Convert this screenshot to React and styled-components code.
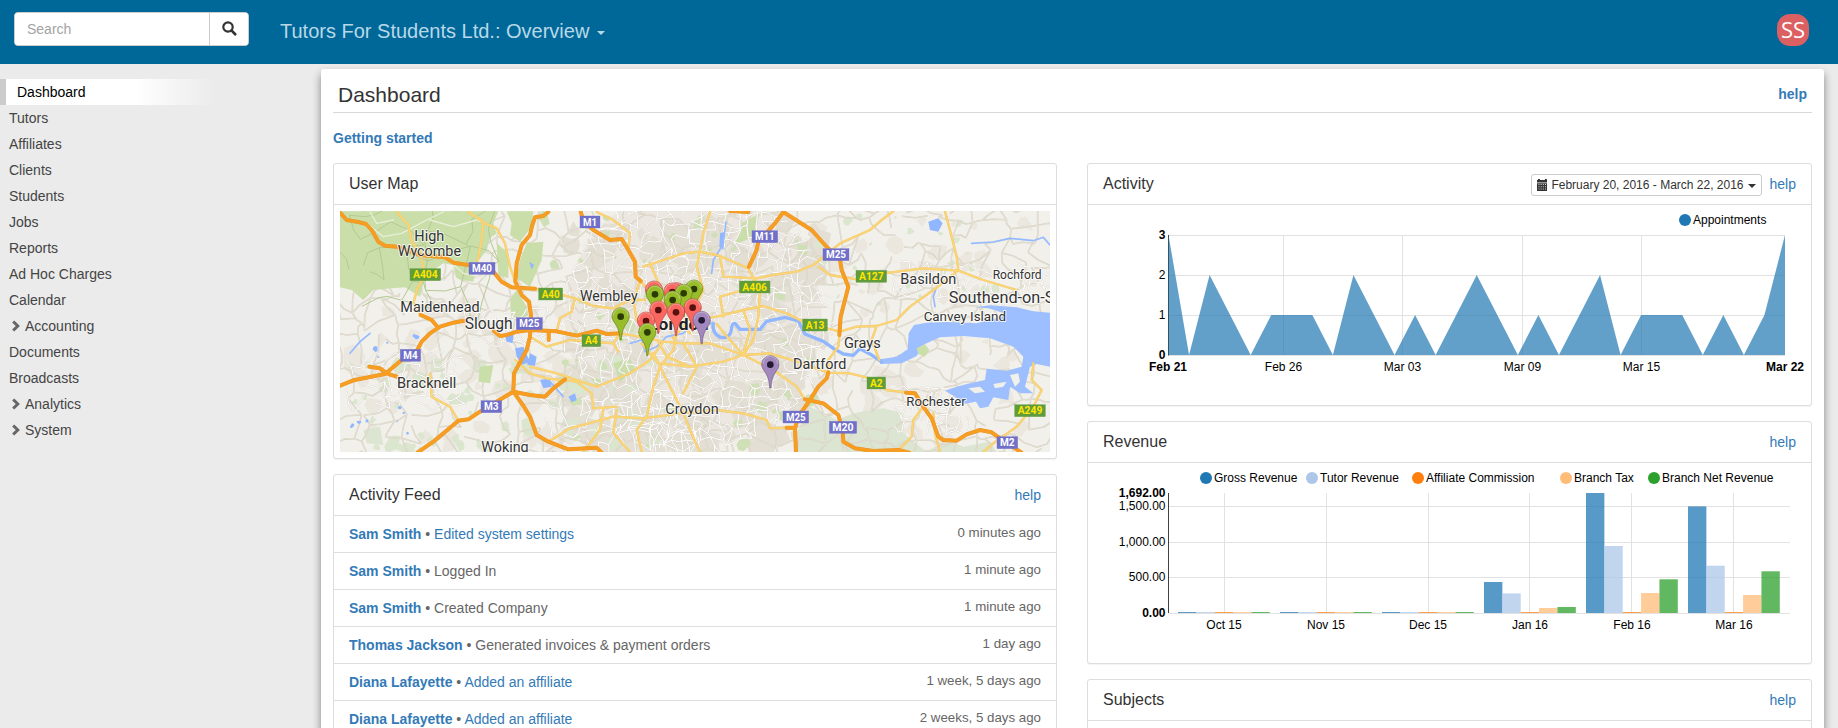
import React from "react";
import styled, { createGlobalStyle } from "styled-components";

const GlobalStyle = createGlobalStyle`
  * { box-sizing: border-box; }
  html, body { margin: 0; padding: 0; height: 100%; overflow: hidden; }
  body {
    background: #ebebeb;
    color: #333;
    font: 14px/20px "Liberation Sans", Arial, sans-serif;
  }
  #root { height: 100%; }
`;

const Page = styled.div`
  height: 728px;
  display: flex;
  flex-direction: column;
  overflow: hidden;
`;

const TopBar = styled.header`
  flex: none;
  height: 64px;
  padding: 0 29px 0 14px;
  background: #006899;
  display: flex;
  align-items: flex-start;
`;

const SearchGroup = styled.div`
  display: flex;
  width: 235px;
  height: 34px;
  margin-top: 12px;
  border: 1px solid #ccc;
  border-radius: 4px;
  background: #fff;
  overflow: hidden;
`;

const SearchInput = styled.input`
  width: 195px;
  border: 0;
  border-right: 1px solid #ccc;
  padding: 0 12px;
  font: inherit;
  outline: none;
  &::placeholder { color: #a3a3a3; opacity: 1; }
`;

const SearchButton = styled.button`
  flex: 1;
  border: 0;
  background: #fff;
  padding: 0 0 1px;
  display: flex;
  align-items: center;
  justify-content: center;
`;

const BranchTitle = styled.div`
  margin: 21px 0 0 31px;
  font-size: 20px;
  line-height: 20px;
  color: #b8d8e8;
  display: flex;
  align-items: center;
  gap: 8px;
`;

const Caret = styled.span`
  border: 4px solid transparent;
  border-top-color: currentColor;
  border-bottom: 0;
  margin-top: ${(p) => p.$drop || 0}px;
`;

const Avatar = styled.div`
  margin: 14px 0 0 auto;
  width: 32px;
  height: 32px;
  border-radius: 13px;
  background: #dc6062;
  color: #fff;
  font: 400 22px/30px "Open Sans", sans-serif;
  text-align: center;
`;

const Columns = styled.div`
  flex: 1;
  display: flex;
  min-height: 0;
`;

const Sidebar = styled.nav`
  width: 321px;
  flex: none;
  padding-top: 15px;
`;

const NavItem = styled.a`
  height: 26px;
  display: flex;
  align-items: center;
  padding-left: ${(p) => (p.$active ? 11 : 9)}px;
  color: ${(p) => (p.$active ? "#000" : "#444")};
  width: 215px;
  ${(p) =>
    p.$active &&
    `border-left: 6px solid #ccc;
     background: linear-gradient(to right, #fff 62%, #ebebeb);`}
`;

const Chevron = styled.svg`
  width: 10px;
  height: 12px;
  margin: 0 4px 0 2px;
`;

const Content = styled.main`
  width: 1503px;
  height: 700px;
  margin-top: 5px;
  padding: 0 12px;
  background: #fff;
  border-radius: 3px;
  box-shadow: 0 5px 8px rgba(0, 0, 0, 0.45);
  flex: none;
`;

const PageHeading = styled.div`
  height: 44px;
  padding: 0 5px;
  border-bottom: 1px solid #d8d8d8;
  display: flex;
  justify-content: space-between;
  align-items: center;
`;

const PageTitle = styled.h1`
  margin: 8px 0 0;
  font-size: 21px;
  font-weight: 400;
`;

const Link = styled.a`
  color: #337ab7;
  font-weight: ${(p) => (p.$bold ? 700 : 400)};
`;

const HeadingLink = styled(Link)`
  margin-top: 6px;
`;

const StartRow = styled.div`
  height: 50px;
  padding-top: 15px;
`;

const Grid = styled.div`
  display: grid;
  grid-template-columns: 724px 725px;
  column-gap: 30px;
  align-items: start;
`;

const Stack = styled.div`
  display: flex;
  flex-direction: column;
  gap: 15px;
`;

const Panel = styled.section`
  border: 1px solid #ddd;
  border-radius: 3px;
  box-shadow: 0 1px 1px rgba(0, 0, 0, 0.05);
  background: #fff;
`;

const PanelHead = styled.div`
  height: 41px;
  padding: 0 15px;
  border-bottom: 1px solid #ddd;
  display: flex;
  align-items: center;
  gap: 8px;
`;

const PanelTitle = styled.h2`
  margin: 0 auto 0 0;
  font-size: 16px;
  font-weight: 400;
`;

const DateButton = styled.button`
  height: 22px;
  width: 231px;
  padding: 0 5px;
  margin-top: 2px;
  border: 1px solid #ccc;
  border-radius: 3px;
  background: #fff;
  color: #333;
  font: 12px/18px "Liberation Sans", Arial, sans-serif;
  display: flex;
  align-items: center;
  gap: 4px;
  white-space: nowrap;
`;

const MapFrame = styled.div`
  padding: 6px;
  height: 253px;
`;

const MapSvg = styled.svg`
  display: block;
  width: 710px;
  height: 241px;
  font-family: Roboto, sans-serif;
`;

const ChartSvg = styled.svg`
  display: block;
  width: 723px;
  height: 200px;
  font: 12px "Liberation Sans", Arial, sans-serif;
`;

const FeedRow = styled.div`
  height: 37px;
  padding: 0 15px;
  border-bottom: 1px solid #ddd;
  color: #666;
  display: flex;
  align-items: center;
  justify-content: space-between;
`;

const FeedTime = styled.span`
  font-size: 13.3px;
  margin-top: -3px;
`;

const PanelSpace = styled.div`
  height: 100px;
`;

const NAV = [
  ["Dashboard"], ["Tutors"], ["Affiliates"], ["Clients"], ["Students"], ["Jobs"], ["Reports"],
  ["Ad Hoc Charges"], ["Calendar"], ["Accounting", true], ["Documents"], ["Broadcasts"],
  ["Analytics", true], ["System", true],
];

const FEED = [
  ["Sam Smith", "Edited system settings", true, "0 minutes ago"],
  ["Sam Smith", "Logged In", false, "1 minute ago"],
  ["Sam Smith", "Created Company", false, "1 minute ago"],
  ["Thomas Jackson", "Generated invoices & payment orders", false, "1 day ago"],
  ["Diana Lafayette", "Added an affiliate", true, "1 week, 5 days ago"],
  ["Diana Lafayette", "Added an affiliate", true, "2 weeks, 5 days ago"],
];

/* ---------- map ---------- */

function makeRandom(seed) {
  let s = seed;
  return () => {
    s = (s * 1664525 + 1013904223) % 4294967296;
    return s / 4294967296;
  };
}

/* A jittered lattice of lanes that covers one rectangle of the map. */
function lanes(seed, x0, y0, x1, y1, step, keep, inside) {
  const rnd = makeRandom(seed);
  const cols = Math.ceil((x1 - x0) / step);
  const rows = Math.ceil((y1 - y0) / step);
  const pts = [];
  for (let r = 0; r <= rows; r++) {
    pts.push([]);
    for (let c = 0; c <= cols; c++) {
      pts[r].push([
        Math.round(x0 + c * step + (rnd() - 0.5) * step * 1.1),
        Math.round(y0 + r * step + (rnd() - 0.5) * step * 1.1),
      ]);
    }
  }
  let d = "";
  for (let r = 0; r <= rows; r++) {
    for (let c = 0; c <= cols; c++) {
      const a = pts[r][c];
      if (inside && !inside(a[0], a[1])) continue;
      const link = (b) => {
        const mx = Math.round((a[0] + b[0]) / 2 + (rnd() - 0.5) * step * 0.35);
        const my = Math.round((a[1] + b[1]) / 2 + (rnd() - 0.5) * step * 0.35);
        d += `M${a[0]} ${a[1]}L${mx} ${my}L${b[0]} ${b[1]}`;
      };
      if (c < cols && rnd() < keep) link(pts[r][c + 1]);
      if (r < rows && rnd() < keep) link(pts[r + 1][c]);
    }
  }
  return d;
}

function blobs(seed, count, x0, y0, x1, y1, size) {
  const rnd = makeRandom(seed);
  let d = "";
  for (let i = 0; i < count; i++) {
    const cx = x0 + rnd() * (x1 - x0);
    const cy = y0 + rnd() * (y1 - y0);
    const r = size * (0.4 + rnd());
    for (let k = 0; k < 8; k++) {
      const a = (k / 8) * Math.PI * 2;
      const q = r * (0.5 + rnd() * 0.8);
      d += `${k ? "L" : "M"}${Math.round(cx + Math.cos(a) * q)} ${Math.round(cy + Math.sin(a) * q)}`;
    }
    d += "Z";
  }
  return d;
}

const inLondon = (x, y) => {
  const dx = (x - 1090) / 400;
  const dy = (y - 350) / 400;
  return dx * dx + dy * dy < 1;
};

const COUNTRY_LANES = lanes(7, 20, 20, 2170, 770, 50, 0.66);
const FOREST_LANES = lanes(31, 20, 20, 420, 300, 75, 0.6);
const CITY_LANES = lanes(21, 660, 20, 1520, 770, 27, 0.7, inLondon);
const TOWN_LANES =
  lanes(3, 410, 330, 640, 420, 24, 0.65) +
  lanes(5, 60, 470, 380, 600, 30, 0.5) +
  lanes(9, 1700, 200, 1900, 300, 26, 0.6) +
  lanes(11, 1700, 570, 1900, 690, 26, 0.6) +
  lanes(13, 640, 600, 1100, 760, 34, 0.6) +
  lanes(15, 1900, 200, 2160, 310, 28, 0.5);
const TOWN_PATCHES = blobs(4, 70, 40, 300, 820, 740, 28) + blobs(6, 60, 1460, 60, 2150, 730, 24);
const CITY_PATCHES = blobs(12, 130, 720, 60, 1480, 740, 40);
const PARKS = blobs(8, 46, 620, 50, 1500, 740, 15);
const WOODS = blobs(10, 70, 40, 480, 1000, 750, 20) + blobs(14, 26, 1440, 50, 2000, 330, 11);
const PONDS = blobs(17, 12, 50, 400, 300, 720, 7);

const FORESTS = [
  "M30 34 H505 L490 70 L500 100 L480 115 L470 150 L440 190 L430 245 L380 235 L370 195 L340 190 L310 210 L280 250 L270 290 L225 262 L185 265 L130 270 L100 300 L65 270 L30 262Z",
  "M530 34 H610 L605 80 L570 125 L540 105 L545 70Z",
  "M590 130 L640 125 L635 180 L600 260 L560 235 L570 180Z",
  "M500 130 L535 160 L535 235 L505 225Z",
  "M560 270 L590 320 L595 350 L545 350 L540 300Z",
  "M850 490 L900 475 L915 510 L870 545Z",
  "M450 500 L490 495 L480 550 L445 545Z",
  "M780 530 L815 540 L800 560Z",
  "M1235 70 L1290 40 L1270 110 L1215 135Z",
];

const PALE_FORESTS = [
  "M1400 756 L1400 700 L1440 620 L1520 660 L1570 640 L1660 625 L1720 640 L1720 700 L1790 756Z",
  "M1790 756 L1850 720 L1900 740 L1980 725 L2000 756Z",
  "M100 690 L150 680 L160 735 L110 730Z",
  "M700 660 L750 650 L740 690 L700 685Z",
];

const ESTUARY =
  "M1650 478 L1700 470 L1733 448 L1736 400 L1752 375 L1790 368 L1850 366 L1940 370 L2010 352 L2030 342 L1975 325 L1935 322 L1980 316 L2060 322 L2110 334 L2160 338 V500 L2120 492 L2100 500 L2085 560 L2110 580 L2070 580 L2040 560 L2035 600 L1990 592 L1975 620 L1950 625 L1938 605 L1900 612 L1875 590 L1845 572 L1880 560 L1920 550 L1965 540 L1970 506 L2030 512 L2075 500 L2080 470 L2050 440 L1980 415 L1900 408 L1830 412 L1785 432 L1760 468 L1715 490 L1650 492Z";

const MARSHES = [
  "M1990 552 L2030 545 L2020 560 L1995 565Z",
  "M2040 525 L2065 520 L2070 545 L2055 560Z",
  "M1915 565 L1950 560 L1965 575 L1935 580Z",
];

const RIVERS = [
  "M1150 370 C1145 400 1170 420 1190 410 C1215 400 1195 370 1215 370 L1230 388 L1290 388 L1310 364 L1365 352 L1405 363 L1425 402 L1480 424 L1510 445 L1540 462 L1570 466 L1590 446 L1620 462 L1655 486",
];

const STREAMS = [
  "M1188 66 L1185 90 L1175 140 L1150 180 L1145 220",
  "M1925 130 L1990 126 L2040 115 L2110 122 L2140 112 L2160 135",
  "M1820 260 L1810 290 L1815 320",
  "M900 430 L935 420 L945 455 L980 440 L1010 410 L1060 400 L1085 375 L1150 370",
  "M60 460 L90 425 L120 400",
  "M640 530 L660 545 L700 590",
];

const LAKES = [
  "M555 445 L580 440 L600 485 L575 495 L560 470Z",
  "M600 460 L620 470 L615 497 L592 495Z",
  "M630 540 L660 535 L665 560 L640 565Z",
  "M715 590 L735 580 L740 600 L725 607Z",
  "M525 405 L550 403 L548 430 L530 425Z",
  "M598 185 L612 195 L605 208Z",
  "M1795 65 L1825 55 L1838 70 L1825 95 L1800 90Z",
  "M1170 100 L1185 95 L1180 150 L1168 140Z",
];

const MAJOR = [
  "M200 36 L235 75 L245 125 L270 155 L285 225 L262 265 L250 310 L272 345",
  "M415 36 L460 65 L455 120 L440 195",
  "M455 66 L500 85 L525 130 L540 200 L556 245",
  "M615 266 L660 275 L735 295 L790 318 L850 325 L900 300 L945 300",
  "M735 295 L725 335 L690 355 L680 394",
  "M800 36 L850 60 L900 100 L895 150",
  "M930 243 L975 290 L1030 350 L1080 400",
  "M940 200 L1000 180 L1060 160 L1110 155 L1170 168 L1255 205 L1290 270 L1285 350 L1270 420 L1240 465",
  "M870 400 L850 430 L865 455 M870 400 L930 410 L1000 425 L1060 430 L1140 430 L1240 465 L1330 510 L1400 560 L1425 598",
  "M1000 425 L960 480 L900 520 L850 540 L800 560 L680 520 L600 500",
  "M1040 400 L1030 450 L990 500 L970 560 L950 650 L920 690 L935 756",
  "M970 460 L1000 520 L1030 580 L1060 640 L1080 690 L1110 756",
  "M935 430 L985 490 L1080 500 L1180 485 L1240 465",
  "M1030 415 L1080 350 L1120 270 L1100 200 L1120 100 L1140 36",
  "M1080 360 L1160 350 L1240 330 L1300 318 L1370 340 L1430 370 L1530 395 L1580 380 L1640 378 L1700 360 L1740 320 L1810 270 L1880 215",
  "M1170 168 L1180 230 L1280 235 L1330 225 L1400 215 L1450 195 L1530 130 L1620 90 L1655 60 L1690 34",
  "M1465 200 L1500 225 L1580 238 L1660 220 L1780 205 L1885 212 L1960 240 L2060 270",
  "M1845 34 L1865 110 L1880 170 L1885 212",
  "M1640 378 L1625 420 L1648 480",
  "M1528 405 L1525 440 L1495 480 L1495 518 L1560 520 L1620 535 L1670 570 L1730 578",
  "M1240 465 L1320 460 L1400 485 L1495 518",
  "M600 410 L650 440 L720 420 L850 430",
  "M300 520 L305 590 L360 620 L385 662",
  "M556 480 L600 520 L650 535 L740 545 L785 580 L790 625 L860 620",
  "M820 625 L810 690 L760 756 M860 630 L850 700 L900 756",
  "M655 725 L720 685 L850 650 L940 655 L1050 640 L1160 630 L1240 640 L1310 660 L1320 685 L1370 683",
  "M1780 620 L1750 660 L1745 710 L1700 756 M1810 640 L1815 700 L1830 756",
  "M2110 490 L2105 540 L2135 570 L2110 620 L2060 680 L1990 730 L1960 756",
  "M1160 372 L1200 420 L1240 465 M1240 460 L1260 390 L1240 330",
  "M1170 290 L1240 270 L1280 235 M1170 290 L1180 350",
  "M930 243 L910 300 L920 360 L980 385 M960 190 L990 260 L1000 340",
  "M985 425 L1010 470 L1080 500 M1060 430 L1100 500 L1060 580",
];

const MOTORWAYS = [
  "M30 38 L50 60 L85 66 L108 72 L125 90 L145 125 L165 137 L200 140 L270 165 L345 172 L370 188 L415 195 L490 215 L515 245 L545 262 L615 266",
  "M655 36 L640 48 L615 52 L607 75 L600 105 L575 135 L560 190 L556 245 L575 285 L597 305 L603 345 L600 410 L590 450 L552 520 L550 575 L582 620 L600 650 L620 705 L655 725 L715 748 L800 743 L815 758",
  "M30 557 L70 541 L165 522 L215 480 L262 450 L275 425 L300 400 L330 380 L370 368 L402 362",
  "M272 345 L305 360 L325 384",
  "M118 500 L150 505 L170 520 L200 530",
  "M492 393 L510 408 L530 405 L560 395 L600 390 L680 394 L740 407 L800 392 L830 402 L872 400",
  "M656 396 V420",
  "M262 758 L310 725 L385 662 L415 658 L450 635 L550 575 L600 585 L645 590 L670 565 L705 538",
  "M752 34 L760 65 L790 90 L840 120 L875 117 L895 150 L915 185 L917 230 L932 243",
  "M1360 36 L1335 70 L1285 125 L1280 150 L1257 200",
  "M1200 33 L1255 36",
  "M1360 36 L1445 90 L1485 135 L1530 180 L1535 210 L1555 260 L1532 350 L1528 405",
  "M1495 518 L1490 535 L1465 560 L1440 600 L1405 650 L1395 685 L1398 758",
  "M1370 683 H1395",
  "M1425 598 L1480 610 L1525 645 L1538 690 L1540 725 L1575 745 L1630 753 L1705 750 L1738 758",
  "M1728 578 L1755 580 L1780 620 L1805 655 L1825 710 L1840 720 L1880 722 L1910 703 L1950 690 L1985 697 L2010 715 L2075 758",
];

/* text, left, baseline, width, size */
const PLACES = [
  ["High", 253, 124, 90, 45],
  ["Wycombe", 203, 168, 190, 45],
  ["Maidenhead", 211, 336, 238, 45],
  ["Slough", 404, 388, 144, 47],
  ["Bracknell", 201, 563, 178, 45],
  ["Wembley", 750, 302, 173, 43],
  ["Woking", 454, 755, 142, 44],
  ["Croydon", 1006, 643, 160, 44],
  ["Basildon", 1711, 252, 168, 45],
  ["Rochford", 1988, 236, 147, 38],
  ["Southend-on-Sea", 1856, 309, 370, 47],
  ["Canvey Island", 1781, 364, 247, 40],
  ["Grays", 1542, 443, 110, 45],
  ["Dartford", 1389, 506, 160, 45],
  ["Rochester", 1729, 618, 178, 40],
];

/* text, left, top, width, is a motorway */
const SHIELDS = [
  ["M1", 750, 48, 60, true],
  ["M40", 417, 187, 78, true],
  ["A404", 240, 206, 92, false],
  ["A40", 626, 264, 72, false],
  ["M25", 559, 353, 78, true],
  ["A4", 756, 404, 56, false],
  ["M4", 211, 448, 61, true],
  ["M3", 453, 602, 62, true],
  ["M11", 1266, 92, 77, true],
  ["M25", 1479, 146, 78, true],
  ["A127", 1578, 211, 92, false],
  ["A406", 1228, 243, 92, false],
  ["A13", 1418, 357, 74, false],
  ["A2", 1611, 531, 56, false],
  ["M25", 1359, 633, 77, true],
  ["M20", 1498, 664, 82, true],
  ["A249", 2054, 614, 92, false],
  ["M2", 2001, 710, 62, true],
];

const PIN_COLORS = {
  red: ["#fa6761", "#b4423e", "#591010"],
  green: ["#98bd2b", "#637f17", "#2c3b04"],
  purple: ["#a288bd", "#6f5a87", "#241a33"],
};

const PINS = [
  ["red", 972, 270], ["red", 1040, 275], ["red", 1027, 276],
  ["green", 1092, 267], ["green", 975, 283], ["green", 1061, 280], ["green", 1028, 300],
  ["red", 1088, 323], ["red", 985, 330], ["red", 1038, 337],
  ["green", 872, 350], ["purple", 1115, 361], ["red", 948, 363],
  ["green", 952, 397], ["purple", 1321, 494],
];

function Pin({ color, x, y }) {
  const [fill, edge, dot] = PIN_COLORS[color];
  return (
    <g transform={`translate(${x} ${y})`}>
      <path
        d="M-2 70 C-3 46 -8 34 -18 19 C-23 12 -26 6 -26 -1 A26 26 0 0 1 26 -1 C26 6 23 12 18 19 C8 34 3 46 2 70Z"
        fill={fill}
        stroke={edge}
        strokeWidth="2"
      />
      <path d="M-22 -3 A22 22 0 0 1 22 -3" fill="none" stroke="#fff" strokeOpacity=".25" strokeWidth="4" />
      <circle r="10" fill={dot} />
    </g>
  );
}

const Lines = ({ paths, color, width }) => (
  <path d={paths.join("")} fill="none" stroke={color} strokeWidth={width} strokeLinejoin="round" strokeLinecap="round" />
);

function UserMap() {
  return (
    <MapSvg viewBox="0 0 710 241" role="img" aria-label="User map">
      <rect width="710" height="241" fill="#f2f0eb" />
      <g transform="translate(-10 -11) scale(.33333)">
        <path d={TOWN_PATCHES} fill="#ebe7df" />
        <ellipse cx="1090" cy="350" rx="385" ry="390" fill="#ece8e1" />
        <path d={CITY_PATCHES} fill="#e4dfd5" />
        <path d={WOODS} fill="#dbe6cf" />
        <path d={PALE_FORESTS.join("")} fill="#dbe5d1" />
        <path d={COUNTRY_LANES} fill="none" stroke="#d3cdbd" strokeWidth="4.5" />
        <path d={COUNTRY_LANES} fill="none" stroke="#f3f0e8" strokeWidth="1.5" />
        <path d={FORESTS.join("")} fill="#c9dea9" />
        <path d={FOREST_LANES} fill="none" stroke="#b4c893" strokeWidth="3" />
        <Lines
          paths={["M110 70 L160 110 L215 100 L290 60 L340 36", "M300 60 L370 80 L440 60 L455 66", "M345 172 L400 220 L470 235", "M120 36 L140 70 L190 60"]}
          color="#e9efd9"
          width={4}
        />
        <path d={PARKS} fill="#cfe0b6" />
        <path d={CITY_LANES + TOWN_LANES} fill="none" stroke="#d8d3c9" strokeWidth="5" />
        <path d={CITY_LANES + TOWN_LANES} fill="none" stroke="#fff" strokeWidth="3" />
        <path d={LAKES.join("") + PONDS} fill="#8fb6ff" />
        <path d={ESTUARY} fill="#9dbfff" />
        <path d={MARSHES.join("")} fill="#f2f0eb" />
        <Lines paths={RIVERS} color="#8fb6ff" width={10} />
        <Lines paths={STREAMS} color="#94baff" width={5} />
        <path d="M1760 445 L1785 432 L1798 450 L1785 470 L1765 462Z" fill="#cbdfab" />
        <Lines paths={MAJOR} color="#eec567" width={7} />
        <Lines paths={MAJOR} color="#fcd575" width={5} />
        <Lines paths={MOTORWAYS} color="#e8942a" width={12} />
        <Lines paths={MOTORWAYS} color="#f79e22" width={9.5} />
        {SHIELDS.map(([text, x, y, w, motorway]) => (
          <g key={text + x}>
            <rect
              x={x} y={y} width={w} height="36"
              fill={motorway ? "#706fc9" : "#609b3c"}
              stroke={motorway ? "#706fc9" : "#609b3c"} strokeWidth="1"
            />
            <text
              x={x + w / 2} y={y + 29} textAnchor="middle" fontSize="32" fontWeight="700"
              textLength={w - 18} lengthAdjust="spacingAndGlyphs" fill={motorway ? "#fff" : "#ffe600"}
            >
              {text}
            </text>
          </g>
        ))}
        {PLACES.map(([text, x, y, w, size]) => (
          <text
            key={text} x={x} y={y} fontSize={size} textLength={w} lengthAdjust="spacingAndGlyphs"
            fill="#333" stroke="#fff" strokeOpacity=".75" strokeWidth="6" strokeLinejoin="round" paintOrder="stroke"
          >
            {text}
          </text>
        ))}
        <text
          x="956" y="389" fontSize="52" fontWeight="700" textLength="180" lengthAdjust="spacingAndGlyphs"
          fill="#222" stroke="#fff" strokeOpacity=".75" strokeWidth="6" paintOrder="stroke"
        >
          London
        </text>
        {PINS.map(([color, x, y]) => (
          <Pin key={`${x}-${y}`} color={color} x={x} y={y} />
        ))}
      </g>
    </MapSvg>
  );
}

/* ---------- charts ---------- */

const LEFT = 80.5;
const TOP = 30.5;
const BASE = 150.5;

const APPOINTMENTS = [
  3, 0, 2, 1, 0, 1, 1, 1, 0, 2, 1, 0, 1, 0, 1, 2, 1, 0, 1, 0, 1, 2, 0, 1, 1, 1, 0, 1, 0, 1, 3,
];

function Legend({ items, y }) {
  return items.map(([label, color, x]) => (
    <g key={label}>
      <circle cx={x} cy={y} r="6" fill={color} />
      <text x={x + 8} y={y + 4}>{label}</text>
    </g>
  ));
}

function ActivityChart() {
  const right = 697;
  const step = (right - LEFT) / 30;
  const area = APPOINTMENTS.map((v, i) => `${LEFT + i * step} ${150 - v * 40}`).join("L");
  const days = [["Feb 26", 195.5], ["Mar 03", 314.5], ["Mar 09", 434.5], ["Mar 15", 553.5]];
  return (
    <ChartSvg viewBox="0 0 723 200">
      <g stroke="#e2e2e2">
        {[0, 1, 2, 3].map((v) => (
          <line key={v} x1={LEFT} x2={right} y1={BASE - v * 40} y2={BASE - v * 40} />
        ))}
        {days.map(([d, x]) => (
          <line key={d} x1={x} x2={x} y1={TOP} y2={BASE} />
        ))}
      </g>
      <line x1={LEFT} x2={LEFT} y1={TOP - 0.5} y2={BASE} stroke="#000" strokeOpacity=".75" />
      <path d={`M${LEFT} 150L${area}L${right} 150Z`} fill="#1f77b4" fillOpacity=".7" />
      {[0, 1, 2, 3].map((v) => (
        <text key={v} x="77.5" y={BASE - v * 40 + 3.5} textAnchor="end" fontWeight={v % 3 ? 400 : 700}>{v}</text>
      ))}
      {[["Feb 21", LEFT - 0.5, true], ...days, ["Mar 22", right, true]].map(([d, x, bold]) => (
        <text key={d} x={x} y="166" textAnchor="middle" fontWeight={bold ? 700 : 400}>{d}</text>
      ))}
      <Legend y={15} items={[["Appointments", "#1f77b4", 597]]} />
    </ChartSvg>
  );
}

const SERIES = [
  ["Gross Revenue", "#1f77b4", 118],
  ["Tutor Revenue", "#aec7e8", 224],
  ["Affiliate Commission", "#ff7f0e", 330],
  ["Branch Tax", "#ffbb78", 478],
  ["Branch Net Revenue", "#2ca02c", 566],
];

/* bar heights in pixels */
const MONTHS = [
  ["Oct 15", [1, 1, 1, 1, 1]],
  ["Nov 15", [1, 1, 1, 1, 1]],
  ["Dec 15", [1, 1, 1, 1, 1]],
  ["Jan 16", [31, 19.6, 1, 5, 6]],
  ["Feb 16", [120, 67, 1, 20, 33.7]],
  ["Mar 16", [106.6, 47.3, 1, 18, 41.7]],
];

function RevenueChart() {
  const ticks = [["1,692.00", 34, true], ["1,500.00", 47], ["1,000.00", 83], ["500.00", 118], ["0.00", 154, true]];
  return (
    <ChartSvg viewBox="0 0 723 200">
      <g stroke="#e2e2e2">
        {[43.5, 79.5, 114.5, 150.5].map((y) => (
          <line key={y} x1={LEFT} x2="702" y1={y} y2={y} />
        ))}
        {MONTHS.map(([m], i) => (
          <line key={m} x1={(i < 3 ? 136.5 : 135.5) + i * 102} x2={(i < 3 ? 136.5 : 135.5) + i * 102} y1="30" y2={BASE} />
        ))}
      </g>
      <line x1={LEFT} x2={LEFT} y1="30" y2="150" stroke="#000" strokeOpacity=".75" />
      {MONTHS.map(([m, bars], i) => (
        <g key={m}>
          {bars.map((h, k) => (
            <rect
              key={k} x={90 + i * 102 + k * 18.36} y={150 - h} width="18.36" height={h}
              fill={SERIES[k][1]} fillOpacity=".75"
            />
          ))}
          <text x={136 + i * 102} y="166" textAnchor="middle">{m}</text>
        </g>
      ))}
      {ticks.map(([t, y, bold]) => (
        <text key={t} x="77.5" y={y} textAnchor="end" fontWeight={bold ? 700 : 400}>{t}</text>
      ))}
      <Legend y={15} items={SERIES} />
    </ChartSvg>
  );
}

/* ---------- icons ---------- */

const SearchIcon = () => (
  <svg width="15" height="15" viewBox="0 0 15 15" fill="none" stroke="#333">
    <circle cx="6" cy="6" r="4.7" strokeWidth="2.2" />
    <path d="M9.4 9.4 L13.2 13.2" strokeWidth="2.7" strokeLinecap="round" />
  </svg>
);

const CalendarIcon = () => (
  <svg width="12" height="12" viewBox="0 0 11 12" preserveAspectRatio="none">
    <path d="M0 1h1V0h2v1h5V0h2v1h1v2.6H0z M0 4.2h11V12H0z" fill="#333" />
    <path d="M1.5 5h1v1h-1z M3.7 5h1v1h-1z M5.9 5h1v1h-1z M8.1 5h1v1h-1z M1.5 7.3h1v1h-1z M3.7 7.3h1v1h-1z M5.9 7.3h1v1h-1z M8.1 7.3h1v1h-1z M1.5 9.6h1v1h-1z M3.7 9.6h1v1h-1z M5.9 9.6h1v1h-1z M8.1 9.6h1v1h-1z" fill="#ddd" />
  </svg>
);

export default function App() {
  return (
    <Page>
      <GlobalStyle />
      <TopBar>
        <SearchGroup>
          <SearchInput placeholder="Search" />
          <SearchButton aria-label="Search"><SearchIcon /></SearchButton>
        </SearchGroup>
        <BranchTitle>
          Tutors For Students Ltd.: Overview
          <Caret $drop={3} />
        </BranchTitle>
        <Avatar>SS</Avatar>
      </TopBar>
      <Columns>
        <Sidebar>
          {NAV.map(([label, nested], i) => (
            <NavItem key={label} $active={i === 0}>
              {nested && (
                <Chevron viewBox="0 0 10 12">
                  <path d="M2.2 1.5 L6.8 6 L2.2 10.5" fill="none" stroke="#666" strokeWidth="3" />
                </Chevron>
              )}
              {label}
            </NavItem>
          ))}
        </Sidebar>
        <Content>
          <PageHeading>
            <PageTitle>Dashboard</PageTitle>
            <HeadingLink $bold>help</HeadingLink>
          </PageHeading>
          <StartRow><Link $bold>Getting started</Link></StartRow>
          <Grid>
            <Stack>
              <Panel>
                <PanelHead><PanelTitle>User Map</PanelTitle></PanelHead>
                <MapFrame><UserMap /></MapFrame>
              </Panel>
              <Panel>
                <PanelHead>
                  <PanelTitle>Activity Feed</PanelTitle>
                  <Link>help</Link>
                </PanelHead>
                {FEED.map(([who, what, linked, when], i) => (
                  <FeedRow key={i}>
                    <span>
                      <Link $bold>{who}</Link> • {linked ? <Link>{what}</Link> : what}
                    </span>
                    <FeedTime>{when}</FeedTime>
                  </FeedRow>
                ))}
              </Panel>
            </Stack>
            <Stack>
              <Panel>
                <PanelHead>
                  <PanelTitle>Activity</PanelTitle>
                  <DateButton>
                    <CalendarIcon />
                    February 20, 2016 - March 22, 2016
                    <Caret $drop={1} />
                  </DateButton>
                  <Link>help</Link>
                </PanelHead>
                <ActivityChart />
              </Panel>
              <Panel>
                <PanelHead>
                  <PanelTitle>Revenue</PanelTitle>
                  <Link>help</Link>
                </PanelHead>
                <RevenueChart />
              </Panel>
              <Panel>
                <PanelHead>
                  <PanelTitle>Subjects</PanelTitle>
                  <Link>help</Link>
                </PanelHead>
                <PanelSpace />
              </Panel>
            </Stack>
          </Grid>
        </Content>
      </Columns>
    </Page>
  );
}
